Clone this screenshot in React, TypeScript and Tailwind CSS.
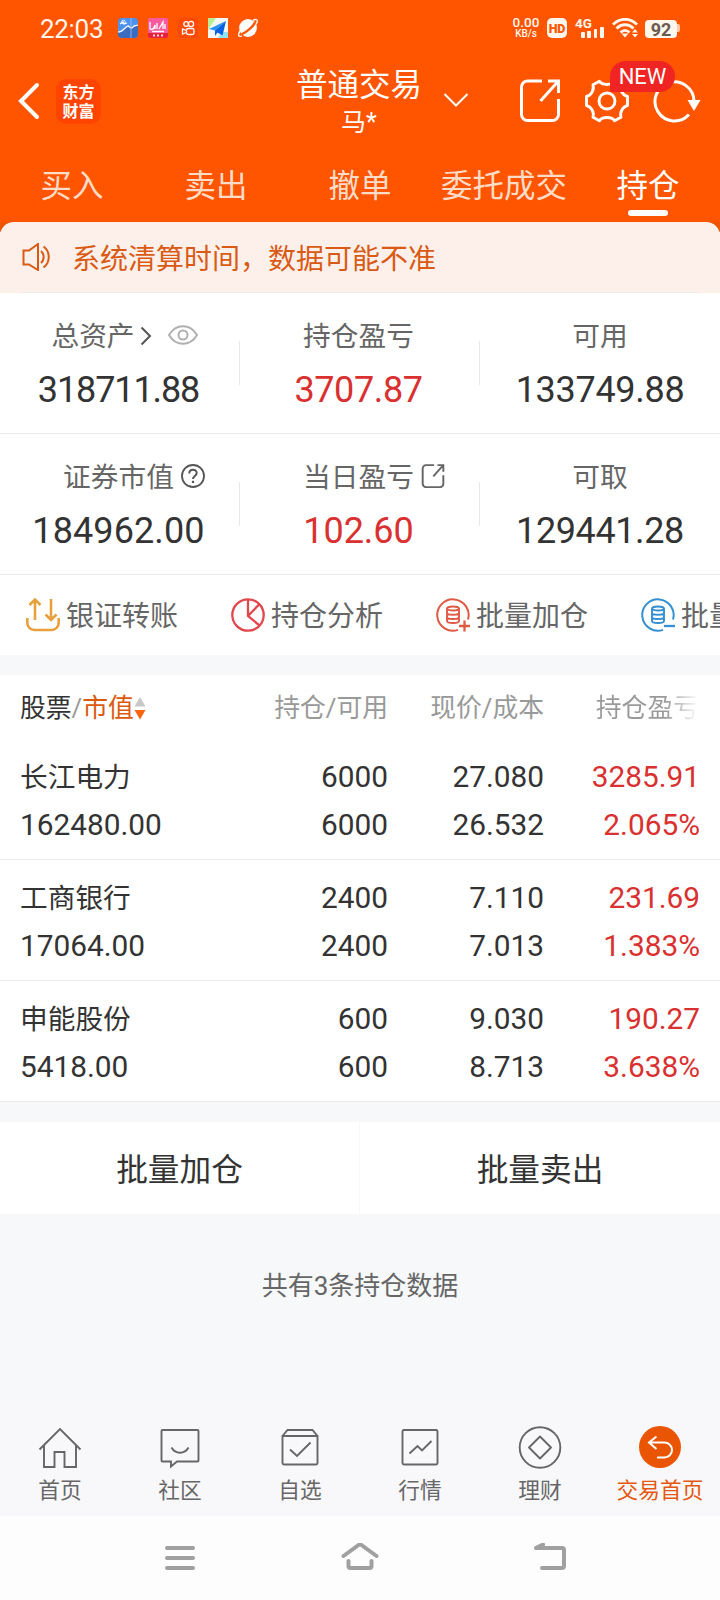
import clsx from "clsx";
import { ReactNode } from "react";

interface SummaryItem {
  label: string;
  value: string;
  tracking: string;
  red?: boolean;
  before?: ReactNode;
  after?: ReactNode;
}

interface Holding {
  name: string;
  marketValue: string;
  total: string;
  available: string;
  price: string;
  cost: string;
  profit: string;
  rate: string;
}

const tabs = ["买入", "卖出", "撤单", "委托成交", "持仓"];

const holdings: Holding[] = [
  {
    name: "长江电力",
    marketValue: "162480.00",
    total: "6000",
    available: "6000",
    price: "27.080",
    cost: "26.532",
    profit: "3285.91",
    rate: "2.065%",
  },
  {
    name: "工商银行",
    marketValue: "17064.00",
    total: "2400",
    available: "2400",
    price: "7.110",
    cost: "7.013",
    profit: "231.69",
    rate: "1.383%",
  },
  {
    name: "申能股份",
    marketValue: "5418.00",
    total: "600",
    available: "600",
    price: "9.030",
    cost: "8.713",
    profit: "190.27",
    rate: "3.638%",
  },
];

const OpenIcon = ({ className, strokeWidth }: { className: string; strokeWidth: number }) => (
  <svg viewBox="0 0 40 43" className={className} fill="none" stroke="currentColor" strokeWidth={strokeWidth}>
    <path d="M22 2H7.500a6 6 0 0 0-6 6v27.500a6 6 0 0 0 6 6h25a6 6 0 0 0 6-6V20" />
    <path d="M28 2h10.500v12M38 2.500 20.500 22" />
  </svg>
);

const StatusBar = () => (
  <div className="h-14 flex items-center pl-[40px] pr-[40px] text-[#fff6ee]">
    <span className="w-[78px] pt-px text-[26px] leading-none tracking-[-0.3px]">22:03</span>
    <div className="flex gap-[10px]">
      <svg viewBox="0 0 20 20" className="w-5 h-5">
        <rect width="20" height="20" rx="4" fill="#4d91ee" />
        <path d="M0 15l5-2 4-4 4 2 7-5v10a4 4 0 0 1-4 4H4a4 4 0 0 1-4-4z" fill="#3b6cc0" />
        <path d="M0 13.500c3 1.500 4-1 6-2.500s4-4 5-2.500 3 2 4 .5 3-1 5-2M2 6l3-2 1 2 3-1" fill="none" stroke="#fff" strokeWidth="1.300" />
        <circle cx="5.500" cy="4" r="1.800" fill="none" stroke="#fff" strokeWidth=".8" />
        <path d="M13 0v20" stroke="#9fc4f5" strokeWidth=".8" />
      </svg>
      <svg viewBox="0 0 20 20" className="w-5 h-5">
        <rect width="20" height="20" rx="2" fill="#fb5a9c" />
        <path d="M0 15h20v3a2 2 0 0 1-2 2H2a2 2 0 0 1-2-2z" fill="#e5213c" />
        <path d="M2 4v7c2 1 4 0 5-4v4M9 5v6M11 11l4-7v7M17 6v5M4 13.500h12" fill="none" stroke="#fff" strokeWidth="1.300" />
        <path d="M5 17.500h2M9 17.500h2M13 17.500h2" stroke="#ffd9d9" strokeWidth="2" />
      </svg>
      <svg viewBox="0 0 20 20" className="w-5 h-5" fill="none" stroke="#fff" strokeWidth="1.300">
        <rect width="20" height="20" rx="3" fill="#ff4906" stroke="none" />
        <circle cx="8.200" cy="6" r="2.400" />
        <circle cx="13" cy="6" r="2.600" />
        <rect x="8.500" y="10.500" width="7.500" height="6" rx="1.800" />
        <path d="M8.500 12.500 4.500 11v5l4-1.500" />
      </svg>
      <svg viewBox="0 0 20 20" className="w-5 h-5">
        <rect width="20" height="20" fill="#f3f8f4" />
        <path d="M0 0h8L0 12z" fill="#b9ef94" />
        <path d="M10 20l4-6h6v6z" fill="#8fe3fb" />
        <path d="M18 3 1 11l6 1.500z" fill="#2694fb" />
        <path d="M18 3 7 12.500V18l2.500-3.500 5 3z" fill="#0a62e0" />
      </svg>
      <svg viewBox="0 0 20 20" className="w-5 h-5">
        <circle cx="10" cy="10" r="8.900" fill="#fff" />
        <path d="M3.500 16.500C8 14.500 15 9 17 4.500" fill="none" stroke="#ff5500" strokeWidth="2.400" />
        <path d="M2.500 12.500C-.5 16.500 0 19.500 4 18M14.500 2.500c4-2 6.500-1 3.500 4" fill="none" stroke="#fff" strokeWidth="1.300" />
      </svg>
    </div>
    <div className="ml-auto flex items-center">
      <div className="w-[30px] mr-[6px] flex flex-col items-center font-medium">
        <span className="text-[13.500px] leading-[13px] mt-[-1px]">0.00</span>
        <span className="text-[10px] leading-[10px]">KB/s</span>
      </div>
      <div className="w-5 h-5 rounded-[5px] bg-[#fff6ee] text-[#ff5500] text-[12.500px] leading-[21px] font-black text-center tracking-[-0.3px]">
        HD
      </div>
      <div className="w-[30px] h-5 ml-2 flex flex-col">
        <span className="text-[13.500px] leading-[10px] font-bold">4G</span>
        <div className="h-[10px] pl-[6px] flex items-end gap-[2.700px]">
          <i className="w-[3.700px] h-[6px] rounded-[1px] bg-[#fff6ee]" />
          <i className="w-[3.700px] h-[7px] rounded-[1px] bg-[#fff6ee]" />
          <i className="w-[3.700px] h-[9px] rounded-[1px] bg-[#fff6ee]" />
          <i className="w-[3.700px] h-[11px] shrink-0 rounded-[1px] bg-[#fff6ee]" />
        </div>
      </div>
      <svg viewBox="0 0 27 20" className="w-[27px] h-5 ml-[7px]" fill="none" stroke="currentColor" strokeWidth="2.800">
        <path d="M1 6.500C8-.5 18-.5 25 6.500M4.500 10.500c5-5 12-5 17 0M8.500 14.500c3-2.800 6-2.800 9 0" />
        <path d="M9.500 15.500h7L13 19.500z" fill="currentColor" stroke="none" />
        <path d="M20 14.500 23 11l3 3.500zM20 16l3 3.500 3-3.500z" fill="currentColor" stroke="none" />
      </svg>
      <div className="ml-[6px] mt-[1px] w-[32px] h-[18px] rounded-[4px] bg-[#fff6ee] text-[#6b5a50] text-[18px] leading-[20px] font-bold text-center">
        92
      </div>
      <i className="w-[3px] h-2 rounded-r-[2px] bg-[#ffc9a8]" />
    </div>
  </div>
);

const Header = () => (
  <div className="relative h-[90px] flex items-center pl-[17px] pr-[19px] text-white">
    <svg viewBox="0 0 24 40" className="w-6 h-10" fill="none" stroke="currentColor" strokeWidth="4" strokeLinecap="round">
      <path d="M20 4 4 20l16 16" />
    </svg>
    <div className="ml-[15px] w-[45px] h-[45px] rounded-[10px] bg-[#ff4400] flex flex-col items-center justify-center font-['Noto_Sans_CJK_SC',sans-serif] font-bold text-[16px] leading-[19px]">
      <span>东方</span>
      <span>财富</span>
    </div>

    {/* Account title */}
    <div className="absolute left-1/2 top-[12px] ml-[-1px] -translate-x-1/2 flex flex-col items-center">
      <span className="text-[31.500px] leading-[36px]">普通交易</span>
      <span className="mt-[4px] text-[25px] leading-[30px]">马*</span>
    </div>
    <svg viewBox="0 0 26 16" className="absolute left-[443px] top-[36px] w-[26px] h-4" fill="none" stroke="currentColor" strokeWidth="2">
      <path d="m1.500 2 11.500 11.500L24.500 2" />
    </svg>

    <div className="ml-auto mt-[-1px] flex items-center">
      <OpenIcon className="w-10 h-[43px]" strokeWidth={3} />
      <svg viewBox="0 0 44 44" className="w-11 h-11 ml-[25px]" fill="none" stroke="currentColor" strokeWidth="2.900" strokeLinejoin="round">
        <path d="M14.500 2.300 C17 6.500 27 6.500 29.500 2.300 L36 5.800 C34.500 11 38 16.500 42.500 17.500 V26.500 C38 27.500 34.500 33 36 38.200 L29.500 41.700 C27 37.500 17 37.500 14.500 41.700 L8 38.200 C9.500 33 6 27.500 1.500 26.500 V17.500 C6 16.500 9.500 11 8 5.800 Z" />
        <circle cx="22" cy="22" r="8" />
      </svg>
      <svg viewBox="0 0 48 44" className="w-12 h-11 ml-[24px]" fill="none" stroke="currentColor" strokeWidth="3">
        <path d="M41 22A19.500 19.500 0 1 0 36 35.500" />
        <path d="M34.500 21h13L41 32z" fill="currentColor" stroke="none" />
      </svg>
    </div>
    <span className="absolute left-[610px] top-[5px] w-[65px] h-[31px] rounded-full rounded-bl-none bg-[#f12424] text-[22px] leading-[32px] text-center">
      NEW
    </span>
  </div>
);

const Tabs = () => (
  <div className="h-[76px] grid grid-cols-5 text-[31.500px] leading-[36px] text-[#ffdcc8]">
    {tabs.map((tab) => (
      <div
        key={tab}
        className={clsx("flex flex-col items-center pt-[23px] whitespace-nowrap", tab === "持仓" && "text-white")}
      >
        {tab}
        {tab === "持仓" && <i className="mt-[5px] w-10 h-[6px] rounded-[3px] bg-white" />}
      </div>
    ))}
  </div>
);

const Notice = () => (
  <div className="bg-[linear-gradient(#eb5500_10px,#fdf0ea_10px)]">
    <div className="h-[70px] rounded-t-[14px] bg-[#fdf0ea] flex items-center pl-[22px] text-[#d95a14]">
      <svg viewBox="0 0 28 28" className="w-7 h-7" fill="none" stroke="currentColor" strokeWidth="2">
        <path d="M1.500 7.500H7L16 1v26l-9-5.500H1.500z" />
        <path d="M19 8c3.500 3 3.500 9 0 12M21.500 3.500c7 5 7 16 0 21" />
      </svg>
      <span className="ml-[22px] pt-[5px] text-[28px] leading-none">系统清算时间，数据可能不准</span>
    </div>
    <div className="mx-5 h-px bg-[#eceaea]" />
  </div>
);

const summary: SummaryItem[][] = [
  [
    {
      label: "总资产",
      value: "318711.88",
      tracking: "tracking-[-1.100px]",
      after: (
        <>
          <svg viewBox="0 0 12 20" className="w-3 h-5 ml-[5px] mt-[-3px]" fill="none" stroke="#555" strokeWidth="2">
            <path d="m1.500 1.500 8.500 8.500-8.500 8.500" />
          </svg>
          <svg viewBox="0 0 30 20" className="w-[30px] h-5 ml-[16px] mr-[-12px] mt-[-5px]" fill="none" stroke="#b0b0b0" strokeWidth="2">
            <path d="M1 10C8-1.700 22-1.700 29 10 22 21.700 8 21.700 1 10z" />
            <circle cx="15" cy="10" r="4.500" />
          </svg>
        </>
      ),
    },
    { label: "持仓盈亏", value: "3707.87", tracking: "tracking-[-0.400px]", red: true },
    { label: "可用", value: "133749.88", tracking: "tracking-[-0.300px]" },
  ],
  [
    {
      label: "证券市值",
      value: "184962.00",
      tracking: "tracking-[0.100px]",
      before: <i className="w-[31px]" />,
      after: (
        <svg viewBox="0 0 24 24" className="w-6 h-6 ml-[7px] mt-[-5px]" fill="none" stroke="#555" strokeWidth="1.800">
          <circle cx="12" cy="12" r="11" />
          <path d="M8.300 9.500c0-5 7.400-5 7.400-.5 0 3-3.700 3-3.700 6" strokeWidth="2" />
          <path d="M12 16.800v2.200" strokeWidth="2.200" />
        </svg>
      ),
    },
    {
      label: "当日盈亏",
      value: "102.60",
      tracking: "tracking-[0px]",
      red: true,
      before: <i className="w-[31px]" />,
      after: (
        <span className="ml-[7px] mt-[-5px] text-[#666]">
          <OpenIcon className="w-6 h-6" strokeWidth={3.5} />
        </span>
      ),
    },
    { label: "可取", value: "129441.28", tracking: "tracking-[-0.400px]" },
  ],
];

const Summary = () => (
  <>
    {summary.map((row, i) => (
      <div key={i} className="h-[141px] grid grid-cols-3 border-b border-[#ebebeb] bg-white">
        {row.map((item, j) => (
          <div
            key={item.label}
            className={clsx("relative flex flex-col items-center pt-[28px]", j < 2 && "pr-[3px]")}
          >
            <div className="h-8 flex items-center text-[27.700px] leading-8 text-[#666] whitespace-nowrap">
              {item.before}
              {item.label}
              {item.after}
            </div>
            <span
              className={clsx(
                "mt-[17px] text-[36px] leading-10",
                item.tracking,
                item.red ? "text-[#d93030]" : "text-[#333]"
              )}
            >
              {item.value}
            </span>
            {j < 2 && <i className="absolute right-0 top-[48px] w-px h-11 bg-[#e8e8e8]" />}
          </div>
        ))}
      </div>
    ))}
  </>
);

const TransferIcon = () => (
  <svg viewBox="0 0 34 34" className="w-[34px] h-[34px]" fill="none" stroke="#e8a03c" strokeWidth="2.600">
    <path d="M9 22V2M3.500 7 9 1.500 14.500 7M25 1v20M19.500 16.500 25 22l5.500-5.500" />
    <path d="M1.300 20v5a7 7 0 0 0 7 7h17.400a7 7 0 0 0 7-7v-5" />
  </svg>
);

const PieIcon = () => (
  <svg viewBox="0 0 34 34" className="w-[34px] h-[34px]" fill="none" stroke="#e0484e" strokeWidth="2.300">
    <circle cx="17" cy="17" r="15.700" />
    <path d="M17 1.500V18l11.500 9.500M17 18 28 6.500" />
  </svg>
);

const StackIcon = ({ plus }: { plus?: boolean }) => (
  <svg viewBox="0 0 34 34" className="w-[34px] h-[34px]" fill="none" stroke={plus ? "#df5a45" : "#338fd4"} strokeWidth="1.900">
    <path d="M32 21.500A15.700 15.700 0 1 0 22 31.900" strokeWidth="2" />
    <ellipse cx="17" cy="10.500" rx="6" ry="2" />
    <path d="M11 10.500v12.500c0 2.700 12 2.700 12 0V10.500M11 14.700c0 2.700 12 2.700 12 0M11 19c0 2.700 12 2.700 12 0" />
    <path d={plus ? "M23 28h11M28.500 22.500v11" : "M23 28h11"} strokeWidth="2.300" />
  </svg>
);

const actions = [
  { label: "银证转账", icon: <TransferIcon /> },
  { label: "持仓分析", icon: <PieIcon /> },
  { label: "批量加仓", icon: <StackIcon plus /> },
  { label: "批量卖出", icon: <StackIcon /> },
];

const Actions = () => (
  <div className="h-[80px] flex items-center pl-[26px] bg-white overflow-hidden">
    {actions.map((a) => (
      <div key={a.label} className="w-[205px] shrink-0 flex items-center gap-[6px] text-[28px] leading-8 text-[#666] whitespace-nowrap">
        {a.icon}
        <span className="pt-[3px]">{a.label}</span>
      </div>
    ))}
  </div>
);

const Cell = ({ top, bottom, className }: { top: string; bottom: string; className?: string }) => (
  <div className={clsx("flex flex-col gap-2", className)}>
    <span className="leading-10">{top}</span>
    <span className="leading-10">{bottom}</span>
  </div>
);

const HoldingsTable = () => (
  <div className="bg-white">
    <div className="h-[64px] pt-[1px] grid grid-cols-[212px_156px_156px_155px] items-center px-5 text-[25.800px] leading-8 text-[#999]">
      <div className="flex items-center whitespace-nowrap">
        <span className="text-[#333]">股票</span>/<span className="text-[#dc5a10]">市值</span>
        <svg viewBox="0 0 12 24" className="w-3 h-6">
          <path d="M6 1l5.500 9.500H.5z" fill="#c8c8c8" />
          <path d="M6 23.500.5 14h11z" fill="#f8640f" />
        </svg>
      </div>
      <span className="text-right">持仓/可用</span>
      <span className="text-right">现价/成本</span>
      <span className="text-right bg-[linear-gradient(90deg,#999_78%,#fff_100%)] bg-clip-text text-transparent">持仓盈亏</span>
    </div>
    {holdings.map((h) => (
      <div
        key={h.name}
        className="h-[121px] pt-[18px] grid grid-cols-[212px_156px_156px_156px] px-5 border-b border-[#ebebeb] text-[29.800px] text-[#333]"
      >
        <div className="flex flex-col gap-2">
          <span className="pt-px text-[27.700px] leading-[39px]">{h.name}</span>
          <span className="leading-10">{h.marketValue}</span>
        </div>
        <Cell top={h.total} bottom={h.available} className="text-right" />
        <Cell top={h.price} bottom={h.cost} className="text-right" />
        <Cell top={h.profit} bottom={h.rate} className="text-right text-[#d93030]" />
      </div>
    ))}
  </div>
);

const navItems = [
  {
    label: "首页",
    icon: <path d="M1.500 22.500 22 2l20.500 20.500M6 18.500V40h10.500V25h10v15H38V18.500" />,
  },
  {
    label: "社区",
    icon: (
      <>
        <path d="M4.500 3h35a1 1 0 0 1 1 1v29.500a1 1 0 0 1-1 1H19l-6 5v-5H4.500a1 1 0 0 1-1-1V4a1 1 0 0 1 1-1z" />
        <path d="M13.500 20.500c4 7 13 7 17 0" />
      </>
    ),
  },
  {
    label: "自选",
    icon: (
      <>
        <path d="M4.500 9v27a1.500 1.500 0 0 0 1.500 1.500h32a1.500 1.500 0 0 0 1.500-1.500V9zM4.500 9l5-6h25l5 6" />
        <path d="M12 22.500l7 6.500 13.500-13.500" />
      </>
    ),
  },
  {
    label: "行情",
    icon: (
      <>
        <rect x="4.500" y="3" width="35" height="34.500" rx="1.500" />
        <path d="m11.500 26.500 8-7.500 4.500 4.500 9.500-9.500" />
      </>
    ),
  },
  {
    label: "理财",
    icon: (
      <>
        <circle cx="22" cy="20.500" r="20.300" />
        <path d="M22 9.500 33 20.500 22 31.500 11 20.500z" strokeLinejoin="round" />
      </>
    ),
  },
];

const BottomNav = () => (
  <div className="h-[116px] grid grid-cols-6 bg-[#f8f8fb] text-[21.700px] leading-7 text-[#666]">
    {navItems.map((n) => (
      <div key={n.label} className="flex flex-col items-center pt-[27px]">
        <svg viewBox="0 0 44 42" className="w-11 h-[42px] overflow-visible" fill="none" stroke="currentColor" strokeWidth="1.900">
          {n.icon}
        </svg>
        <span className="mt-[8px]">{n.label}</span>
      </div>
    ))}
    <div className="flex flex-col items-center pt-[26px] text-[#e4570c] whitespace-nowrap">
      <svg viewBox="0 0 42 42" className="w-[42px] h-[42px]" fill="none" stroke="#fff" strokeWidth="2">
        <circle cx="21" cy="21" r="21" fill="#ea5504" stroke="none" />
        <path d="M17.500 10.500 10 16.500l7.500 6.500M10 16.500h15.500a7.500 7.500 0 0 1 0 15H18" />
      </svg>
      <span className="mt-[9px]">交易首页</span>
    </div>
  </div>
);

const SystemNav = () => (
  <div className="h-[84px] flex items-center pl-[165px] bg-[#fdfdfd] text-[#a0a0a0]">
    <svg viewBox="0 0 30 30" className="w-[30px] h-[30px]" stroke="currentColor" strokeWidth="4" strokeLinecap="round">
      <path d="M2 5h26M2 15h26M2 25h26" />
    </svg>
    <svg viewBox="0 0 38 30" className="w-[38px] h-[30px] ml-[146px]" fill="none" stroke="currentColor" strokeWidth="4" strokeLinecap="round">
      <path d="M2.500 13 19 1l16.500 12M7.500 18v5a2 2 0 0 0 2 2h19a2 2 0 0 0 2-2v-5" />
    </svg>
    <svg viewBox="0 0 34 30" className="w-[34px] h-[30px] ml-[154px]" fill="none" stroke="currentColor" strokeWidth="4" strokeLinecap="round" strokeLinejoin="round">
      <path d="M10 1.500 3 5h26a2 2 0 0 1 2 2v16a2 2 0 0 1-2 2H9" />
    </svg>
  </div>
);

export default function App() {
  return (
    <div className="w-[720px] h-[1600px] flex flex-col overflow-hidden bg-[#f7f8fa] font-['Roboto','Noto_Sans_CJK_SC',sans-serif]">
      <div className="bg-[#ff5500]">
        <StatusBar />
        <Header />
        <Tabs />
      </div>
      <div className="bg-white">
        <Notice />
      </div>
      <Summary />
      <Actions />
      <div className="h-5" />
      <HoldingsTable />

      {/* Batch buttons */}
      <div className="mt-5 h-[92px] grid grid-cols-[359px_360px] gap-px text-[31.700px] text-[#333]">
        <button className="bg-white pt-[5px]">批量加仓</button>
        <button className="bg-white pt-[5px]">批量卖出</button>
      </div>
      <p className="mt-[54px] text-center text-[26px] leading-9 text-[#666]">共有3条持仓数据</p>

      <div className="mt-auto">
        <BottomNav />
        <SystemNav />
      </div>
    </div>
  );
}
